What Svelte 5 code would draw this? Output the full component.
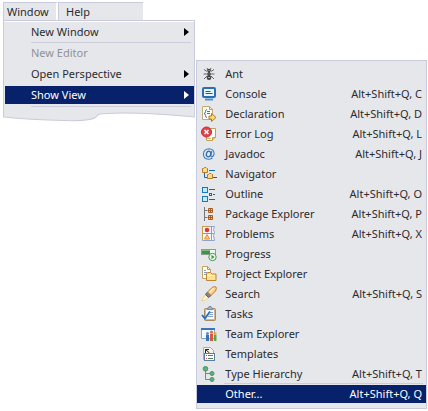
<script lang="ts">
	type View = { name: string; icon: string; keys?: string };

	const views: View[] = [
		{ name: 'Ant', icon: 'ant' },
		{ name: 'Console', icon: 'console', keys: 'Alt+Shift+Q, C' },
		{ name: 'Declaration', icon: 'declaration', keys: 'Alt+Shift+Q, D' },
		{ name: 'Error Log', icon: 'error', keys: 'Alt+Shift+Q, L' },
		{ name: 'Javadoc', icon: 'javadoc', keys: 'Alt+Shift+Q, J' },
		{ name: 'Navigator', icon: 'navigator' },
		{ name: 'Outline', icon: 'outline', keys: 'Alt+Shift+Q, O' },
		{ name: 'Package Explorer', icon: 'package', keys: 'Alt+Shift+Q, P' },
		{ name: 'Problems', icon: 'problems', keys: 'Alt+Shift+Q, X' },
		{ name: 'Progress', icon: 'progress' },
		{ name: 'Project Explorer', icon: 'project' },
		{ name: 'Search', icon: 'search', keys: 'Alt+Shift+Q, S' },
		{ name: 'Tasks', icon: 'tasks' },
		{ name: 'Team Explorer', icon: 'team' },
		{ name: 'Templates', icon: 'templates' },
		{ name: 'Type Hierarchy', icon: 'hierarchy', keys: 'Alt+Shift+Q, T' },
	];
</script>

{#snippet arrow()}
	<svg class="arrow" width="5" height="8" viewBox="0 0 5 8" aria-hidden="true"><path d="M0 0 5 4 0 8z" fill="currentColor" /></svg>
{/snippet}

{#snippet viewIcon(icon: string)}
	<svg class="icon" width="16" height="16" viewBox="0 0 16 16" fill="none" aria-hidden="true">
		{#if icon === 'ant'}
			<path d="M3 3.5l3 2M13 3.5l-3 2M2.5 8H13.5M3 13l3-3M13 13l-3-3M6 2l1 2M10 2L9 4" stroke="#666" />
			<circle cx="8" cy="4.5" r="1.8" fill="#444" />
			<ellipse cx="8" cy="8" rx="1.6" ry="2" fill="#333" />
			<ellipse cx="8" cy="11.5" rx="2.3" ry="2.5" fill="#444" />
			<path d="M7.5 4.5h1M7.5 8h1M7 11.5h2" stroke="#aaa" />
		{:else if icon === 'console'}
			<rect x="2" y="2" width="12" height="9" rx="1" fill="#e9f3fc" stroke="#2a6fb4" stroke-width="2" />
			<path d="M4.500 5.500h5M4.500 7.500h7" stroke="#28588e" />
			<path d="M4 13.500h8" stroke="#4d92cc" stroke-width="2" />
		{:else if icon === 'declaration'}
			<path d="M1.500 .5h7l3 3v10h-10z" fill="#fdfdf6" stroke="#c3ab74" />
			<path d="M8.500 .5v3h3" stroke="#b39b64" />
			<path d="M6 3.500q-1.500 0-1.500 2T3 7.500q1.500 0 1.500 2t1.500 2M6 5.500h3M6 7.500h3" stroke="#3977b3" />
			<path d="M8 10h2.500V7.500l4.500 4-4.500 4V13H8z" fill="#f8dc76" stroke="#ad7e20" />
		{:else if icon === 'error'}
			<path d="M5.500 2.500h9v9l-3 3h-6z" fill="#fffdf2" stroke="#bc9f5a" />
			<path d="M11.500 14.500v-3h3" fill="#ecd28a" stroke="#bc9f5a" />
			<circle cx="5.500" cy="6" r="5" fill="#e2404a" stroke="#c92c38" />
			<path d="M3.500 4l4 4M7.500 4l-4 4" stroke="#fff" stroke-width="1.6" />
			<path d="M6 12.500h4" stroke="#d2b66d" />
		{:else if icon === 'javadoc'}
			<path d="M10.800 5l-.9 4.500q-.2 1.600 1 1.400 2.200-.6 2.200-3.600Q12.600 3 8.100 2.800 2.900 3 2.400 8q0 5 5 5.300 2.200 0 4-1.200" stroke="#3c7cbe" stroke-width="1.100" />
			<ellipse cx="7.600" cy="8" rx="2.200" ry="2.800" transform="rotate(20 7.600 8)" stroke="#2a6db2" stroke-width="1.300" />
		{:else if icon === 'navigator'}
			<path d="M3.500 6v5.500h3M8 4.500h6M12 11.500h4" stroke="#1769a5" />
			<path d="M1.500 2.500h1l1-1h1.500l1 1h.5v4h-5z" fill="#f9dd8c" stroke="#b97a20" />
			<path d="M6.500 8.500h1l1-1H10l1 1h.5v4h-5z" fill="#f9dd8c" stroke="#b97a20" />
		{:else if icon === 'outline'}
			<rect x="1.500" y="1.500" width="5" height="5" fill="#bfeafb" stroke="#1679b8" />
			<rect x="1.500" y="10.500" width="5" height="5" fill="#bfeafb" stroke="#1679b8" />
			<rect x="8.500" y="7.500" width="2" height="2" stroke="#1769a5" />
			<path d="M8 3.500h6M12 8.500h2M8 13.500h6" stroke="#1769a5" />
		{:else if icon === 'package'}
			<path d="M3.500 1v14M3.500 4.500h3M3.500 11.500h3" stroke="#767676" />
			<path d="M7.500 2.500h4v4h-4zM7.500 9.500h4v4h-4z" fill="#f4c478" stroke="#a55c24" />
			<path d="M9.500 2v5M7 4.500h5M9.500 9v5M7 11.500h5" stroke="#a55c24" />
		{:else if icon === 'problems'}
			<path d="M1.500 .5h12l-1 3 1 3-1 3 1 5h-12z" fill="#f5f8fc" stroke="#8fa3c8" />
			<path d="M1 .5h7M1.500 1v13" stroke="#c49f4d" />
			<path d="M10.500 1v13M2 7.500h11" stroke="#819dc3" />
			<circle cx="6" cy="4" r="2.300" fill="#e5343e" />
			<path d="M6 8.500L3.500 13h5z" fill="#ffda75" stroke="#e08a3d" />
		{:else if icon === 'progress'}
			<rect x=".5" y="3.500" width="14" height="5" fill="#eff5ef" stroke="#86a08c" />
			<path d="M1 4h8v4H1z" fill="#3b934a" />
			<path d="M1 4.500h8" stroke="#81bb80" />
			<circle cx="11.500" cy="11" r="3.700" fill="#f0f8e9" stroke="#4c9156" />
			<path d="M10.500 8.800v4.400l3-2.200z" fill="#36984a" />
		{:else if icon === 'project'}
			<path d="M1.500 .5h5l3 3v9h-8z" fill="#fffdf4" stroke="#c0a468" />
			<path d="M6.500 .5v3h3M3 4.500h2M3 6.500h3M3 8.500h2" stroke="#8999af" />
			<path d="M5.500 8l1-1.500h3L11 8h4v6.500H5.500z" fill="#fae194" stroke="#bd8432" />
			<path d="M6 9.500h8" stroke="#fff3c5" />
		{:else if icon === 'search'}
			<path d="M4.500 8.500l3 3L4 14.500H.5z" fill="#fff6cc" stroke="#f0cf8c" />
			<path d="M4.500 8.500l2-2.500L10 9.500l-2.500 2z" fill="#85808a" stroke="#5d5862" />
			<path d="M6.500 6L11 1.500q3-1.500 4-.5t-.5 4L10 9.500z" fill="#f8cd84" stroke="#bf7f36" />
			<path d="M8.500 6.500L13 2" stroke="#fdeec8" stroke-width="1.500" />
		{:else if icon === 'tasks'}
			<rect x="3.500" y="2.500" width="11" height="12" rx="1" fill="#d3b78c" stroke="#a88a62" />
			<path d="M5 4h8v9H5z" fill="#f5f9fe" />
			<path d="M6.500 3.500V2h1L8 .5h2l.5 1.500h1v1.500z" fill="#a9b7cb" stroke="#7787a0" />
			<path d="M9 6.500h3M8.500 8.500h3.500M7 10.500h5" stroke="#829ec0" />
			<path d="M1 9l3 3.500L9 5.500" stroke="#1f70c0" stroke-width="1.800" />
		{:else if icon === 'team'}
			<path d="M.5 2.500h13v10H.5z" fill="#f7fbff" stroke="#8aa3ca" />
			<path d="M0 3h14" stroke="#3874c4" stroke-width="2" />
			<path d="M5 9h3v6H5z" fill="#3474bc" />
			<path d="M9 8h3v7H9z" fill="#df5540" />
			<path d="M13 9h2.500v6H13z" fill="#57a84c" />
			<circle cx="6.500" cy="7.500" r="1.500" fill="#4f8ed0" />
			<circle cx="10.500" cy="6.200" r="1.600" fill="#e46a4b" />
			<circle cx="14.200" cy="7.500" r="1.500" fill="#e6a944" />
		{:else if icon === 'templates'}
			<path d="M2.500 1.500h7l3 3v9h-10z" fill="#f4f2e9" stroke="#b9ab86" />
			<path d="M4.500 7V3.500H8M4.500 3.500l4 3.500" stroke="#222" />
			<rect x="3.500" y="7.500" width="10" height="7" fill="#fff" stroke="#5e7da4" />
			<path d="M5 9.500h1M5 12.500h1" stroke="#cf4938" />
			<path d="M7 9.500h5M7 12.500h5" stroke="#558458" />
		{:else if icon === 'hierarchy'}
			<path d="M4.500 4v9.500H11M4.500 7.500H11" stroke="#7c8580" />
			<circle cx="4.500" cy="2.800" r="2.300" fill="#5eaf78" stroke="#4a9067" />
			<circle cx="11" cy="7.500" r="2" fill="#5eaf78" stroke="#4a9067" />
			<circle cx="11" cy="13.500" r="2" fill="#5eaf78" stroke="#4a9067" />
		{/if}
	</svg>
{/snippet}

<div class="page">
	<div class="left">
		<nav class="menubar">
			<button class="tab window">Window</button>
			<button class="tab help">Help</button>
		</nav>
		<div class="dropdown" role="menu">
			<button class="item" role="menuitem">New Window {@render arrow()}</button>
			<hr />
			<button class="item" role="menuitem" disabled>New Editor</button>
			<button class="item" role="menuitem">Open Perspective {@render arrow()}</button>
			<button class="item selected" role="menuitem">Show View {@render arrow()}</button>
			<hr />
		</div>
		<svg class="torn" height="15" viewBox="0 0 192 15" preserveAspectRatio="none" aria-hidden="true">
			<path d="M.5 0V10C20 12 42 13 62 13.500C76 14 88 14 93 10C95 6 98 7 104 6.500C130 5 158 7 191.500 10V0" fill="#e6e7eb" stroke="#c9cadd" />
		</svg>
	</div>

	<div class="submenu" role="menu">
		{#each views as view}
			<button class="view" role="menuitem">
				{@render viewIcon(view.icon)}
				<span>{view.name}</span>
				{#if view.keys}
					<kbd>{view.keys}</kbd>
				{/if}
			</button>
		{/each}
		<hr />
		<button class="view selected" role="menuitem">
			<span class="icon"></span>
			<span>Other...</span>
			<kbd>Alt+Shift+Q, Q</kbd>
		</button>
	</div>
</div>

<style>
	:global(body) {
		background: #fff;
	}

	.page {
		display: grid;
		grid-template-columns: 5fr 6fr;
		column-gap: 1px;
		align-items: start;
		padding: 2px 1px 2px 3px;
		font-family: 'Noto Sans', 'Open Sans', sans-serif;
		font-size: 11px;
		line-height: 18px;
		color: #2b2b2e;
	}

	button {
		margin: 0;
		border: 0;
		background: none;
		font: inherit;
		color: inherit;
		text-align: left;
		white-space: nowrap;
	}

	.menubar {
		display: flex;
		width: 73%;
		height: 18px;
		background: #e6e7eb;
	}

	.tab {
		border-top: 1px solid #c9cadd;
		border-left: 1px solid #c9cadd;
		line-height: 17px;
	}

	.window {
		flex: 0 0 55px;
		border-right: 2px solid #fff;
		padding: 0 3px;
	}

	.help {
		flex: 1;
		padding: 0 7px;
	}

	.dropdown {
		display: flex;
		flex-direction: column;
		border: 1px solid #c9cadd;
		border-bottom: 0;
		padding-top: 2px;
		background: #e6e7eb;
		box-shadow: inset 0 1px #fff;
	}

	hr {
		width: auto;
		height: 1px;
		margin: 0 3px 0 27px;
		border: 0;
		background: #cbccdc;
	}

	.item {
		display: flex;
		align-items: center;
		justify-content: space-between;
		height: 18px;
		margin: 0 0 1px 1px;
		padding: 0 5px 0 26px;
	}

	.dropdown hr + .item {
		margin-top: 1px;
		margin-bottom: 3px;
	}

	.item + .item {
		margin-bottom: 3px;
	}

	.item.selected {
		margin-bottom: 2px;
	}

	.item:disabled {
		color: #919195;
	}

	.arrow {
		color: #000;
	}

	.selected,
	.selected .arrow {
		color: #fff;
	}

	.selected {
		background: #07226b;
	}

	.torn {
		display: block;
		width: 100%;
	}

	.submenu {
		display: flex;
		flex-direction: column;
		margin-top: 58px;
		border: 1px solid #c9cadd;
		padding: 2px 0 5px;
		background: #e6e7eb;
	}

	.view {
		display: flex;
		align-items: center;
		gap: 8px;
		height: 18px;
		margin-top: 2px;
		padding: 0 4px;
	}

	.icon {
		flex: 0 0 16px;
	}

	.submenu hr + .view {
		margin-top: 1px;
	}

	kbd {
		margin-left: auto;
		font: inherit;
	}
</style>
